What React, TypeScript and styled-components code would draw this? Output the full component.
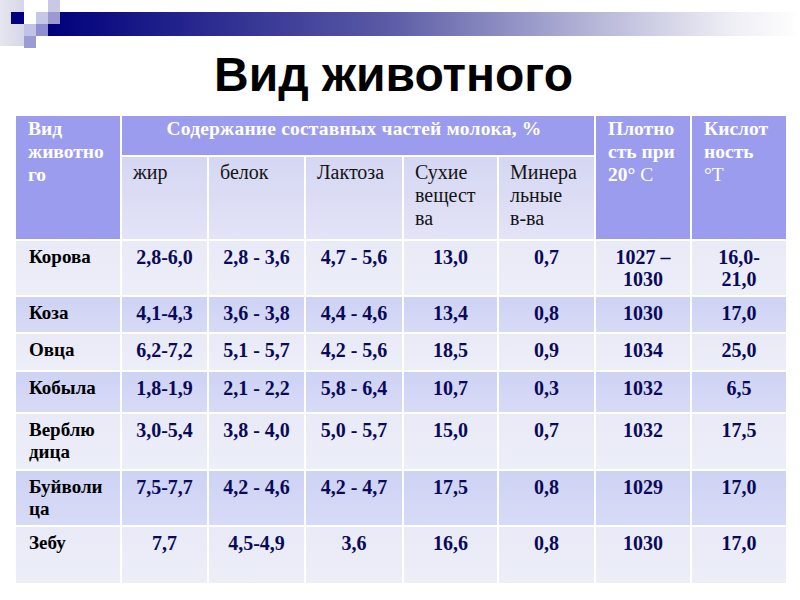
import React from "react";
import styled, { createGlobalStyle } from "styled-components";

interface AnimalRow {
  name: string;
  values: string[];
  height: number;
}

const rows: AnimalRow[] = [
  { name: "Корова", values: ["2,8-6,0", "2,8 - 3,6", "4,7 - 5,6", "13,0", "0,7", "1027 –\n1030", "16,0-\n21,0"], height: 56 },
  { name: "Коза", values: ["4,1-4,3", "3,6 - 3,8", "4,4 - 4,6", "13,4", "0,8", "1030", "17,0"], height: 37 },
  { name: "Овца", values: ["6,2-7,2", "5,1 - 5,7", "4,2 - 5,6", "18,5", "0,9", "1034", "25,0"], height: 38 },
  { name: "Кобыла", values: ["1,8-1,9", "2,1 - 2,2", "5,8 - 6,4", "10,7", "0,3", "1032", "6,5"], height: 42 },
  { name: "Верблю\nдица", values: ["3,0-5,4", "3,8 - 4,0", "5,0 - 5,7", "15,0", "0,7", "1032", "17,5"], height: 57 },
  { name: "Буйволи\nца", values: ["7,5-7,7", "4,2 - 4,6", "4,2 - 4,7", "17,5", "0,8", "1029", "17,0"], height: 56 },
  { name: "Зебу", values: ["7,7", "4,5-4,9", "3,6", "16,6", "0,8", "1030", "17,0"], height: 58 },
];

const subHeads = ["жир", "белок", "Лактоза", "Сухие\nвещест\nва", "Минера\nльные\nв-ва"];
const colWidths = [106, 87, 97, 98, 95, 97, 96, 96];

const GlobalStyle = createGlobalStyle`
  body {
    margin: 0;
    background: #fff;
    font-family: "Liberation Serif", "Times New Roman", serif;
  }
`;

const Slide = styled.div`
  width: 800px;
  height: 600px;
  overflow: hidden;
  background: #fff;
`;

const Decor = styled.svg`
  display: block;
`;

const Title = styled.h1`
  margin: 0;
  padding-right: 13px;
  text-align: center;
  font-family: "Liberation Sans", Arial, sans-serif;
  font-weight: 700;
  font-size: 48px;
  line-height: 54px;
  color: #000;
`;

const TableWrap = styled.div`
  padding: 12px 13px 0 14px;
`;

const Table = styled.table`
  width: 772px;
  table-layout: fixed;
  border-collapse: collapse;
`;

const HeadRow = styled.tr<{ $h: number }>`
  height: ${(p) => p.$h}px;
`;

const HeadCell = styled.th<{ $center?: boolean }>`
  background: #9c9cef;
  border: 2px solid #fff;
  color: #fff;
  font-weight: 700;
  font-size: 19.5px;
  line-height: 23px;
  letter-spacing: ${(p) => (p.$center ? "0.2px" : "0")};
  text-align: ${(p) => (p.$center ? "center" : "left")};
  vertical-align: top;
  padding: ${(p) => (p.$center ? "1px 12px 0 4px" : "1px 8px 0 12px")};
  white-space: pre-line;
`;

const Light = styled.span`
  font-weight: 400;
`;

const SubCell = styled.th`
  background: linear-gradient(180deg, #d5d6f2 0%, #e3e4f7 100%);
  border: 2px solid #fff;
  color: #141414;
  font-weight: 400;
  font-size: 20px;
  line-height: 23px;
  text-align: left;
  vertical-align: top;
  padding: 4px 6px 0 11px;
  white-space: pre-line;
`;

const BodyRow = styled.tr<{ $h: number; $alt: boolean }>`
  height: ${(p) => p.$h}px;
  background: ${(p) =>
    p.$alt
      ? "linear-gradient(180deg, #ced2f4 0%, #d8dbf6 100%)"
      : "linear-gradient(180deg, #e9eaf7 0%, #eceef8 100%)"};
`;

const NameCell = styled.td`
  border: 2px solid #fff;
  color: #000;
  font-weight: 700;
  font-size: 19px;
  line-height: 22px;
  text-align: left;
  vertical-align: top;
  padding: 5px 6px 0 13px;
  white-space: pre-line;
`;

const ValueCell = styled.td`
  border: 2px solid #fff;
  color: #0a0a58;
  font-weight: 700;
  font-size: 20px;
  line-height: 22px;
  text-align: center;
  vertical-align: top;
  padding: 5px 2px 0 2px;
  white-space: pre-line;
`;

const TopDecor: React.FC = () => (
  <Decor width={800} height={48} viewBox="0 0 800 48">
    <defs>
      <linearGradient id="bar" x1="0" x2="1" y1="0" y2="0">
        <stop offset="0" stopColor="#00007c" />
        <stop offset="0.45" stopColor="#5a5aa6" />
        <stop offset="0.72" stopColor="#b4b4d8" />
        <stop offset="0.9" stopColor="#ececf4" />
        <stop offset="1" stopColor="#ffffff" />
      </linearGradient>
      <linearGradient id="side" x1="0" x2="1" y1="0" y2="0">
        <stop offset="0" stopColor="#e6e6ef" />
        <stop offset="1" stopColor="#d6d6ea" />
      </linearGradient>
    </defs>
    <rect x={0} y={0} width={24} height={46} fill="url(#side)" />
    <rect x={48} y={12} width={752} height={24} fill="url(#bar)" />
    <rect x={11} y={12} width={13} height={12} fill="#000080" />
    <rect x={48} y={0} width={12} height={12} fill="#c9c9e6" />
    <rect x={36} y={12} width={12} height={12} fill="#c6c6e8" />
    <rect x={48} y={12} width={12} height={12} fill="#9a9acf" />
    <rect x={24} y={24} width={12} height={12} fill="#c2c2e6" />
    <rect x={36} y={24} width={12} height={12} fill="#8f8fcf" />
    <rect x={24} y={36} width={12} height={12} fill="#9c9cd4" />
  </Decor>
);

const App: React.FC = () => {
  return (
    <>
      <GlobalStyle />
      <Slide>
        <TopDecor />
        <Title>Вид животного</Title>
        <TableWrap>
          <Table>
            <colgroup>
              {colWidths.map((w, i) => (
                <col key={i} style={{ width: w }} />
              ))}
            </colgroup>
            <thead>
              <HeadRow $h={41}>
                <HeadCell rowSpan={2}>{"Вид\nживотно\nго"}</HeadCell>
                <HeadCell colSpan={5} $center>
                  Содержание составных частей молока, %
                </HeadCell>
                <HeadCell rowSpan={2}>
                  {"Плотно\nсть при\n20°"}
                  <Light> C</Light>
                </HeadCell>
                <HeadCell rowSpan={2}>
                  {"Кислот\nность\n"}
                  <Light>°T</Light>
                </HeadCell>
              </HeadRow>
              <HeadRow $h={84}>
                {subHeads.map((s) => (
                  <SubCell key={s}>{s}</SubCell>
                ))}
              </HeadRow>
            </thead>
            <tbody>
              {rows.map((r, i) => (
                <BodyRow key={r.name} $h={r.height} $alt={i % 2 === 1}>
                  <NameCell>{r.name}</NameCell>
                  {r.values.map((v, j) => (
                    <ValueCell key={j}>{v}</ValueCell>
                  ))}
                </BodyRow>
              ))}
            </tbody>
          </Table>
        </TableWrap>
      </Slide>
    </>
  );
};

export default App;
